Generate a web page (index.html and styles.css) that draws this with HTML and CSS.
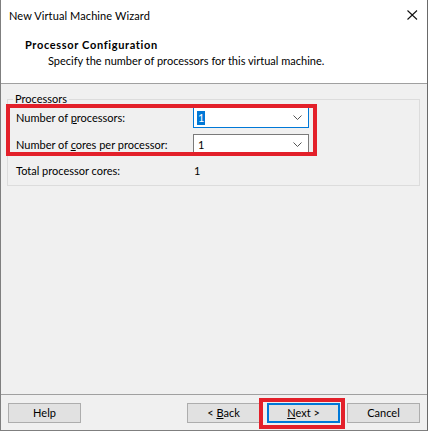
FILE: index.html
```html
<!DOCTYPE html>
<html>
<head>
<meta charset="utf-8">
<link rel="stylesheet" href="styles.css">
</head>
<body>
<div class="window">
  <div class="titlebar">
    <span class="title">New Virtual Machine Wizard</span>
    <svg class="close" width="11" height="10" viewBox="0 0 11 10"><path d="M0.5 0.5 L10 9.5 M10 0.5 L0.5 9.5" stroke="#111" stroke-width="1.1" fill="none"/></svg>
  </div>
  <div class="header">
    <div class="h-title">Processor Configuration</div>
    <div class="h-sub">Specify the number of processors for this virtual machine.</div>
  </div>
  <div class="content">
    <fieldset class="group">
      <legend>Processors</legend>
      <div class="row first">
        <span class="label">Number of <u>p</u>rocessors:</span>
        <div class="combo focused"><span class="sel">1</span><svg class="chev" width="9" height="5" viewBox="0 0 9 5"><path d="M0.5 0.5 L4.5 4.5 L8.5 0.5" stroke="#555" fill="none"/></svg></div>
      </div>
      <div class="row">
        <span class="label">Number of <u>c</u>ores per processor:</span>
        <div class="combo"><span class="val">1</span><svg class="chev" width="9" height="5" viewBox="0 0 9 5"><path d="M0.5 0.5 L4.5 4.5 L8.5 0.5" stroke="#555" fill="none"/></svg></div>
      </div>
      <div class="row total">
        <span class="label">Total processor cores:</span>
        <span class="tval">1</span>
      </div>
    </fieldset>
  </div>
  <div class="footer">
    <button class="btn">Help</button>
    <div class="spacer"></div>
    <button class="btn">&lt; <u>B</u>ack</button>
    <button class="btn default"><u>N</u>ext &gt;</button>
    <button class="btn">Cancel</button>
  </div>
  <div class="mark mark-fields"></div>
  <div class="mark mark-next"></div>
</div>
</body>
</html>
```
FILE: styles.css
```css
* { box-sizing: border-box; }
html, body { margin: 0; padding: 0; background: #ffffff; }
body {
  font-family: Lato, "Noto Sans", sans-serif;
  font-size: 11px;
  color: #000;
}
.window {
  position: relative;
  width: 428px;
  height: 431px;
  border-left: 1px solid #7f7f7f;
  border-right: 1px solid #6a6a6a;
  border-bottom: 1px solid #7f7f7f;
  display: flex;
  flex-direction: column;
  background: #f0f0f0;
}
.titlebar {
  height: 30px;
  background: #fff;
  display: flex;
  align-items: center;
  justify-content: space-between;
  padding: 0 9px 0 8px;
}
.title { letter-spacing: 0.1px; }
.close { display: block; }
.header {
  height: 54px;
  background: #fff;
  border-bottom: 1px solid #a0a0a0;
  padding: 7px 0 0 24px;
}
.h-title { font-weight: bold; line-height: 16px; letter-spacing: 0.65px; }
.h-sub { line-height: 16px; padding-left: 23px; }
.content {
  flex: 1;
  padding: 7px 0 0 6px;
}
.group {
  width: 413px;
  height: 95px;
  margin: 0;
  border: 1px solid #dcdcdc;
  padding: 0 0 0 8px;
}
.group legend {
  padding: 0 2px;
  margin-left: -3px;
  line-height: 16px;
}
.row {
  display: flex;
  align-items: center;
  height: 21px;
  margin-top: 6px;
  white-space: nowrap;
}
.row.first { margin-top: 0; }
.row.total { margin-top: 7px; height: 16px; }
.label { width: 177px; flex: none; }
.combo {
  width: 116px;
  height: 21px;
  background: #fff;
  border: 1px solid #7a7a7a;
  display: flex;
  align-items: center;
  justify-content: space-between;
  padding: 0 6px 0 3px;
}
.combo.focused { border-color: #0078d7; }
.sel { background: #0078d7; color: #fff; line-height: 14px; padding: 0 1px; }
.val { padding-left: 1px; }
.tval { padding-left: 1px; }
.chev { display: block; }
.footer {
  height: 36px;
  border-top: 1px solid #a0a0a0;
  display: flex;
  align-items: flex-start;
  padding: 8px 7px 0 7px;
  gap: 7px;
}
.spacer { flex: 1; }
.btn {
  width: 73px;
  height: 20px;
  background: #e1e1e1;
  border: 1px solid #adadad;
  font-family: inherit;
  font-size: 11px;
  color: #000;
  padding: 0;
  margin: 0;
  line-height: 16px;
}
.btn.default { border: 2px solid #0078d7; }
.mark {
  position: absolute;
  border: 4px solid #e3202a;
}
.mark-fields { left: 5px; top: 104px; width: 311px; height: 52px; }
.mark-next { left: 258px; top: 398px; width: 86px; height: 31px; }
```
